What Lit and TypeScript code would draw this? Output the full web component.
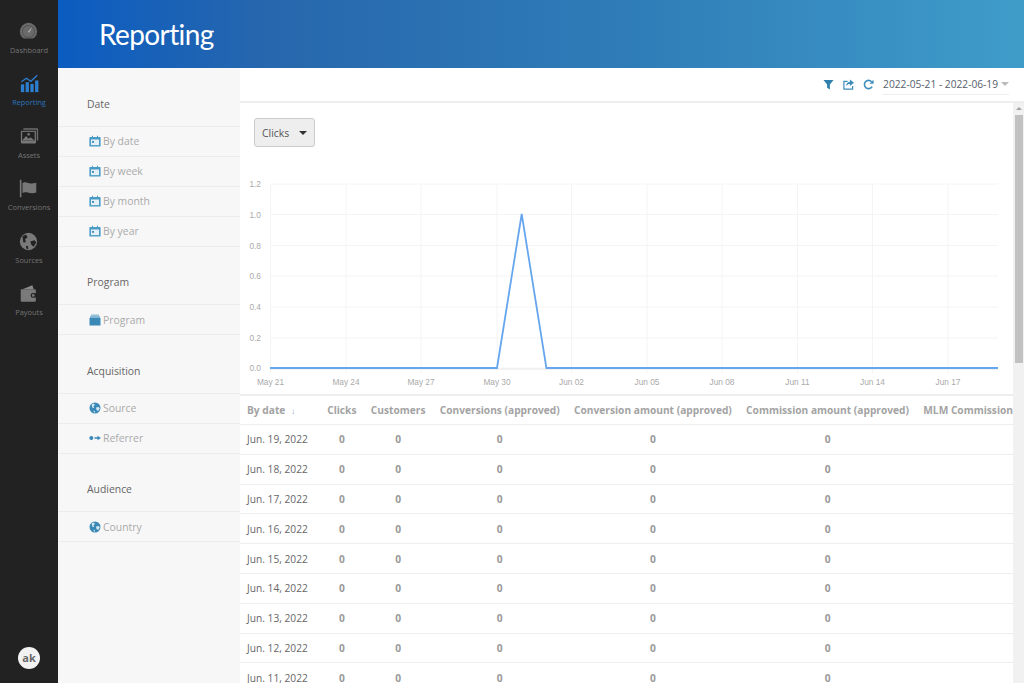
import { LitElement, html, css, svg } from "lit";
import { customElement } from "lit/decorators.js";

const calIcon = html`<svg class="ic" viewBox="0 0 12 12"><path fill="#4a9cc6" d="M1 2h2V.8h1V2h4V.8h1V2h2a.6.6 0 0 1 .6.6V11a.6.6 0 0 1-.6.6H1a.6.6 0 0 1-.6-.6V2.600A.6.6 0 0 1 1 2z"/><rect x="2" y="4.500" width="8" height="5.600" fill="#e4f0f6"/><rect x="3" y="6" width="2" height="1.800" fill="#3d8dba"/></svg>`;
const boxIcon = html`<svg class="ic" viewBox="0 0 12 12"><rect x="2" y=".5" width="8" height="1.400" fill="#8dbdd8"/><rect x="1" y="2.200" width="10" height="1.400" fill="#6aa8cc"/><rect x=".5" y="3.800" width="11" height="7.700" rx=".6" fill="#3a89b6"/></svg>`;
const globeIcon = html`<svg class="ic" viewBox="0 0 12 12"><circle cx="6" cy="6" r="5.500" fill="#3a89b6"/><path fill="#d6e8f2" d="M2.500 2.500 5 1.600l.8 1.500-1.300 1.200.6 1.600-1.500.2zM7 5.500l2.800-.6 1 1.500-1.600 2.500L7.500 8zM4.500 8.800l1.300.3.2 1.700-1.200-.5z"/></svg>`;
const refIcon = html`<svg class="ic" viewBox="0 0 12 12"><circle cx="2.300" cy="6" r="2" fill="#3a89b6"/><path fill="#3a89b6" d="M5.500 5.300h3V3.800L12 6 8.500 8.200V6.700h-3z"/></svg>`;

type Item = { label: string; icon: unknown };
const groups: { title: string; items: Item[] }[] = [
  { title: "Date", items: ["By date", "By week", "By month", "By year"].map((label) => ({ label, icon: calIcon })) },
  { title: "Program", items: [{ label: "Program", icon: boxIcon }] },
  { title: "Acquisition", items: [{ label: "Source", icon: globeIcon }, { label: "Referrer", icon: refIcon }] },
  { title: "Audience", items: [{ label: "Country", icon: globeIcon }] },
];

const navIcons: Record<string, unknown> = {
  Dashboard: svg`<circle cx="11" cy="11" r="10" fill="#6a6a6a"/><circle cx="11" cy="11" r="7" fill="none" stroke="#555" stroke-width="1.200"/><path d="M5 19h12l1.500 3h-15z" fill="#222"/><path d="M10 11.500 15.500 5.500 12 12.500z" fill="#aaa"/>`,
  Reporting: svg`<g fill="#2c7fd0"><rect x="1" y="12" width="3.800" height="9"/><rect x="6.500" y="9.500" width="3.800" height="11.500"/><rect x="12" y="11.500" width="3.800" height="9.500"/><rect x="17.500" y="7.500" width="3.800" height="13.500"/></g><path d="M1.500 9 7.500 5l5 3.500L20 1.500" fill="none" stroke="#2c7fd0" stroke-width="1.500"/>`,
  Assets: svg`<path fill="#6e6e6e" d="M4 1.500h15.500a1.500 1.500 0 0 1 1.500 1.500v12.500h-1.500V3.200H4z"/><rect x="1" y="4.200" width="17.500" height="15" rx="1.200" fill="#777"/><rect x="2.500" y="5.700" width="14.500" height="10" fill="#222"/><circle cx="10" cy="8.500" r="1.500" fill="#777"/><path fill="#777" d="M2.500 15.700 7 10.500l3 3 2-1.500 5 3.700z"/>`,
  Conversions: svg`<rect x="1" y="1" width="1.800" height="20" fill="#7a7a7a"/><path fill="#777" d="M4 4.500c3-1.500 5 0 8 .5s5 0 8-.8v11.500c-3 1-6 1-9 .3s-5-.8-7 .3z"/>`,
  Sources: svg`<circle cx="11" cy="11" r="10" fill="#7a7a7a"/><path fill="#222" d="M4 5l4-2 2 3-3 2.500 1 3.500-3 .3zM13 11l5-1.500 2 2.500-3 5-2.500-2zM8 16l2.500.5.300 3.500-2.300-1z"/>`,
  Payouts: svg`<path fill="#8a8a8a" d="M4 6 15.500 1.500 17 6z"/><path fill="#7a7a7a" d="M2 6h16a1.500 1.500 0 0 1 1.500 1.500V19a1.500 1.500 0 0 1-1.500 1.500H3.500A1.500 1.500 0 0 1 2 19z"/><rect x="13.500" y="10.500" width="7" height="5.500" rx="2.700" fill="#222"/><circle cx="16.500" cy="13.200" r="1.500" fill="#7a7a7a"/>`,
};

const nav = ["Dashboard", "Reporting", "Assets", "Conversions", "Sources", "Payouts"];
const xTicks: [number, string][] = [[270.5, "May 21"], [346, "May 24"], [421, "May 27"], [497, "May 30"], [571.5, "Jun 02"], [647, "Jun 05"], [722, "Jun 08"], [797.5, "Jun 11"], [872.5, "Jun 14"], [948, "Jun 17"]];
const yTicks: [number, string][] = [[184, "1.2"], [214.5, "1.0"], [245.5, "0.8"], [276, "0.6"], [307, "0.4"], [338, "0.2"], [368, "0.0"]];
const dates = [19, 18, 17, 16, 15, 14, 13, 12, 11];
const cols = ["Clicks", "Customers", "Conversions (approved)", "Conversion amount (approved)", "Commission amount (approved)", "MLM Commission amount"];

@customElement("app-root")
export class AppRoot extends LitElement {
  static styles = css`
    :host { display: flex; width: 1024px; height: 683px; overflow: hidden; font-family: "Open Sans", sans-serif; background: #fff; }
    .rail { width: 58px; flex: none; background: #222; display: flex; flex-direction: column; align-items: center; padding-top: 22px; box-sizing: border-box; }
    .nav { height: 52.4px; flex: none; display: flex; flex-direction: column; align-items: center; font-size: 7.400px; line-height: 12px; color: #747474; gap: 3px; }
    .nav svg { width: 19px; height: 19px; display: block; }
    .nav.on { color: #2a74bf; }
    .avatar { margin-top: auto; margin-bottom: 14px; width: 22px; height: 22px; border-radius: 50%; background: #f2f2f2; color: #6a6a6a; font-weight: 700; font-size: 11px; line-height: 21px; text-align: center; }
    .main { flex: 1; min-width: 0; display: flex; flex-direction: column; }
    .hero { height: 68px; flex: none; box-sizing: border-box; padding-left: 41px; background: linear-gradient(90deg, #0b5cc1 0%, #2767ad 22%, #2f7db8 60%, #3f9cc9 100%); color: #fff; font-family: "Lato", sans-serif; font-size: 28px; line-height: 68px; letter-spacing: -.6px; }
    .body { flex: 1; min-height: 0; display: flex; }
    .side { width: 182px; flex: none; background: #f7f7f7; font-size: 10.4px; box-sizing: border-box; padding-top: 21px; }
    .group { margin-bottom: 20.700px; }
    .gt { height: 38px; padding: 7px 0 0 29px; box-sizing: border-box; line-height: 16px; font-size: 10.4px; color: #666; border-bottom: 1px solid #ececec; }
    .it { height: 29.900px; box-sizing: border-box; padding-left: 31px; display: flex; align-items: center; gap: 2px; color: #aaa; border-bottom: 1px solid #ececec; }
    .ic { width: 12px; height: 12px; flex: none; }
    .content { flex: 1; min-width: 0; display: flex; flex-direction: column; }
    .bar { height: 35px; flex: none; box-sizing: border-box; border-bottom: 2px solid #eee; display: flex; align-items: center; justify-content: flex-end; padding: 0 15px 1px 0; gap: 9px; }
    .bar svg { width: 11px; height: 11px; display: block; }
    .range { display: flex; align-items: center; gap: 3px; font-size: 10.200px; color: #555e6b; height: 20px; border-bottom: 1px solid #eee; margin-top: 1px; }
    .caret { width: 0; height: 0; border: 4px solid transparent; border-top-color: #bbb; border-bottom: 0; }
    .lower { flex: 1; min-height: 0; display: flex; }
    .scroll { flex: 1; min-width: 0; overflow: hidden; }
    .btn { display: inline-flex; align-items: center; margin: 15px 0 0 14px; width: 61px; height: 29px; box-sizing: border-box; background: #eee; border: 1px solid #ccc; border-radius: 3px; padding: 0 7px; font-size: 10.4px; color: #555; justify-content: space-between; }
    .btn i { width: 0; height: 0; border: 4px solid transparent; border-top-color: #333; border-bottom: 0; }
    .chart { display: block; width: 773px; height: 246.500px; margin-top: 0; }
    .chart text { font-family: "Liberation Sans", sans-serif; font-size: 8.300px; fill: #aaa; }
    table { border-collapse: collapse; white-space: nowrap; font-size: 10.200px; border-top: 2px solid #eee; }
    th { height: 30px; box-sizing: border-box; padding: 0 7.150px; text-align: left; font-weight: 700; color: #a3a3a3; border-bottom: 1px solid #eee; }
    th:first-child { min-width: 80px; padding-left: 7px; }
    th small { font-size: 8px; color: #7f9cbc; font-weight: 400; margin-left: 3px; }
    td { height: 29.800px; box-sizing: border-box; padding: 0 7.150px; text-align: center; font-weight: 700; color: #999; border-bottom: 1px solid #eee; }
    td:first-child { text-align: left; font-weight: 400; color: #666; padding-left: 7px; }
    .track { width: 11px; flex: none; background: #f1f1f1; display: flex; flex-direction: column; align-items: center; }
    .up { width: 0; height: 0; margin-top: 4px; border: 3px solid transparent; border-bottom-color: #a3a3a3; border-top: 0; }
    .thumb { width: 8px; height: 248px; background: #c1c1c1; margin-top: 5px; }
  `;

  render() {
    return html`
      <div class="rail">
        ${nav.map((n) => html`<div class="nav ${n === "Reporting" ? "on" : ""}"><svg viewBox="0 0 22 22">${navIcons[n]}</svg>${n}</div>`)}
        <div class="avatar">ak</div>
      </div>
      <div class="main">
        <div class="hero">Reporting</div>
        <div class="body">
          <div class="side">
            ${groups.map((g) => html`<div class="group"><div class="gt">${g.title}</div>${g.items.map((i) => html`<div class="it">${i.icon}${i.label}</div>`)}</div>`)}
          </div>
          <div class="content">
            <div class="bar">
              <svg viewBox="0 0 12 12"><path fill="#2f80ad" d="M.5 1h11L7.500 6v5.500L4.500 9.500V6z"/></svg>
              <svg viewBox="0 0 12 12"><path fill="none" stroke="#3d8dba" stroke-width="1.300" d="M5 2.500H1v8.500h9.500V7.500"/><path fill="#3d8dba" d="M7.500 .5 12 4 7.500 7.500V5.500C6 5.500 4.500 6 3.500 8c0-3 1.500-4.800 4-5z"/></svg>
              <svg viewBox="0 0 12 12"><path fill="none" stroke="#3d8dba" stroke-width="1.700" d="M10 8.200A4.500 4.500 0 1 1 9.400 3"/><path fill="#3d8dba" d="M11.500 .8v4.400H7.100z"/></svg>
              <div class="range">2022-05-21 - 2022-06-19<span class="caret"></span></div>
            </div>
            <div class="lower">
              <div class="scroll">
                <div class="btn">Clicks<i></i></div>
                <svg class="chart" viewBox="240 147 773 246.500">
                  ${yTicks.map(([y, t]) => svg`<line x1="270" x2="998" y1=${y} y2=${y} stroke="#f4f4f4"/><text x="261" y=${y + 3} text-anchor="end">${t}</text>`)}
                  ${xTicks.map(([x, t]) => svg`<line x1=${x} x2=${x} y1="184" y2="373" stroke="#f4f4f4"/><text x=${x} y="385" text-anchor="middle">${t}</text>`)}
                  <line x1="270" x2="998" y1="369" y2="369" stroke="#e6e6e6"/>
                  <polyline fill="none" stroke="#66a6ee" stroke-width="1.800" points="270,368 497,368 521.700,214 546.400,368 998,368"/>
                </svg>
                <table>
                  <tr><th>By date <small>↓</small></th>${cols.map((c) => html`<th>${c}</th>`)}</tr>
                  ${dates.map((d) => html`<tr><td>Jun. ${d}, 2022</td>${cols.map((_, i) => html`<td>${i < 5 ? "0" : ""}</td>`)}</tr>`)}
                </table>
              </div>
              <div class="track"><span class="up"></span><div class="thumb"></div></div>
            </div>
          </div>
        </div>
      </div>
    `;
  }
}
